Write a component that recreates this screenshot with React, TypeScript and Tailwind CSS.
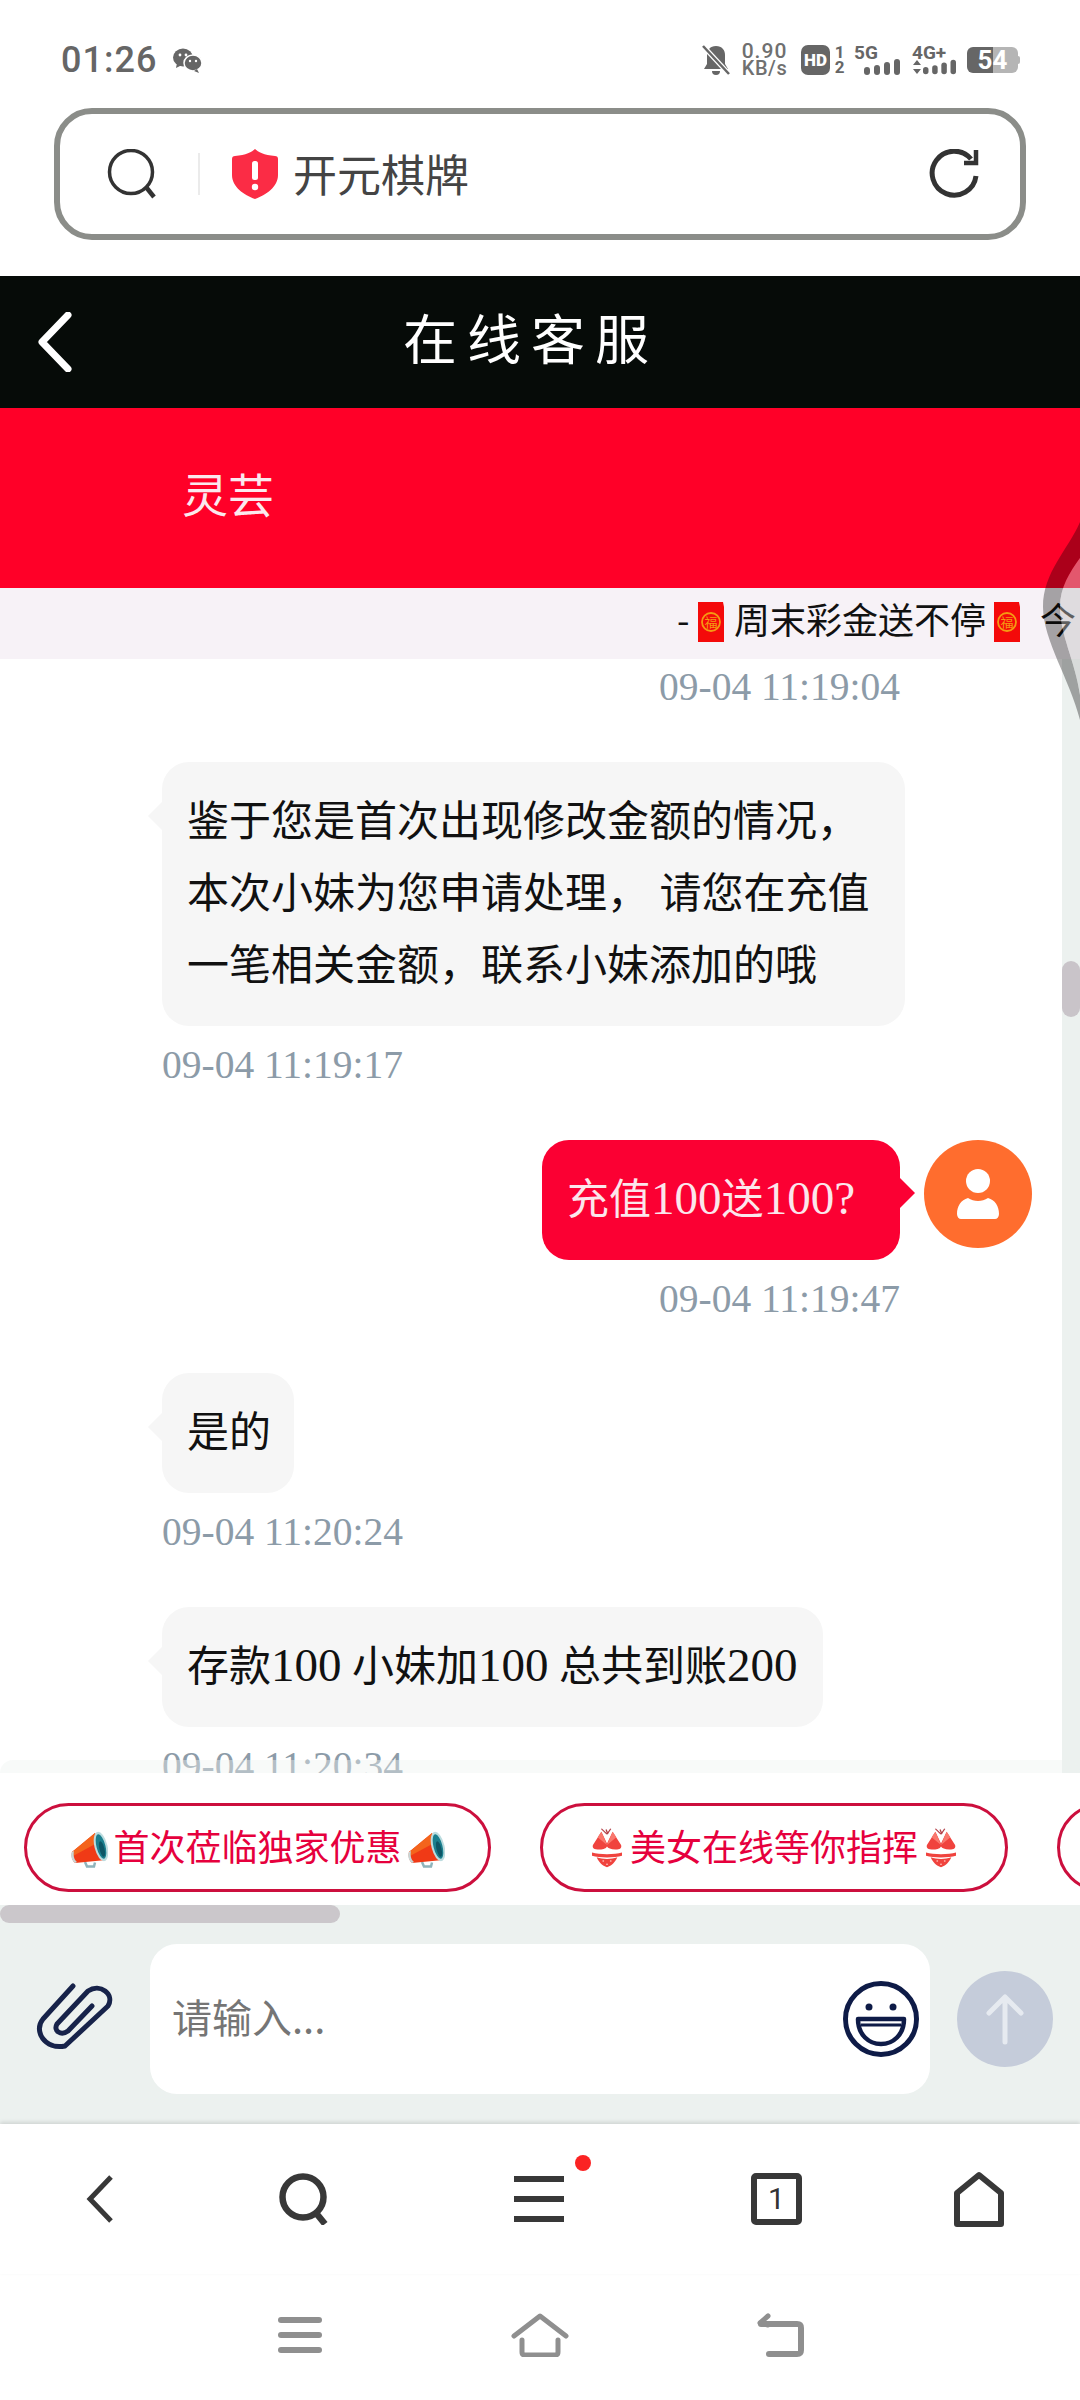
import React from "react";

const Ts = ({ t, right, first }: { t: string; right?: boolean; first?: boolean }) => (
  <div
    className={`h-[44px] text-[39.5px] leading-[44px] text-[#8c9ba8] font-['Liberation_Serif','Noto_Sans_CJK_SC',serif] whitespace-nowrap ${
      first ? "mt-0" : "mt-[17px]"
    } ${right ? "text-right pr-[162px]" : "pl-[162px]"}`}
  >
    {t}
  </div>
);

const Left = ({ children }: { children: React.ReactNode }) => (
  <div className="relative ml-[162px] w-fit rounded-[27px] bg-[#f6f6f6] px-[25px] py-[24px] font-['Liberation_Serif','Noto_Sans_CJK_SC',serif] text-[42px] leading-[72px] text-[#111] whitespace-nowrap">
    <div className="absolute left-[-14px] top-[40px] h-0 w-0 border-y-[14px] border-r-[14px] border-y-transparent border-r-[#f6f6f6]" />
    {children}
  </div>
);

const Num = ({ children }: { children: React.ReactNode }) => <span className="text-[47px] leading-none">{children}</span>;

const Bars = ({ w = 36 }: { w?: number }) => (
  <svg width={w} height="16" viewBox="0 0 36 16" fill="#666">
    <rect x="0" y="8" width="6" height="8" rx="3" />
    <rect x="10" y="6" width="6" height="10" rx="3" />
    <rect x="20" y="3" width="6" height="13" rx="3" />
    <rect x="30" y="0" width="6" height="16" rx="3" />
  </svg>
);

const Packet = () => (
  <svg width="26" height="40" viewBox="0 0 26 40" className="shrink-0">
    <path d="M0 0H25L26 5V40H0Z" fill="#f40a0a" />
    <circle cx="13" cy="20" r="9" fill="#f40a0a" stroke="#f59a12" strokeWidth="1.8" />
    <text x="13" y="25" textAnchor="middle" fontSize="13" fill="#f59a12" fontFamily="Noto Sans CJK SC">福</text>
  </svg>
);

const Megaphone = () => (
  <svg width="38" height="40" viewBox="0 0 38 40" className="shrink-0">
    <path d="M15 34l2 4.5h7l1-4" fill="none" stroke="#8fb4bb" strokeWidth="2.5" />
    <path d="M2 24L25 5L36 32L5 35C2 33 1 27 2 24Z" fill="#f03a16" />
    <path d="M2 24L25 5L29 14L3 28Z" fill="#f4641c" />
    <path d="M2 24C0 27 2 33 5 35L7 34C4 32 3 27 4 23Z" fill="#c9d6d6" />
    <ellipse cx="31" cy="18.5" rx="6.5" ry="15" transform="rotate(-14 31 18.5)" fill="#bcdcdf" />
    <ellipse cx="31" cy="18.5" rx="4.5" ry="12.5" transform="rotate(-14 31 18.5)" fill="#1b7f8e" />
    <ellipse cx="32" cy="21" rx="2.5" ry="8" transform="rotate(-14 32 21)" fill="#0e5666" />
  </svg>
);

const Bikini = () => (
  <svg width="30" height="40" viewBox="0 0 32 52" preserveAspectRatio="none" className="shrink-0">
    <path d="M15 2l2 6M20 1l-4 7M10 1l6 7" stroke="#b3424a" strokeWidth="1.4" fill="none" />
    <path d="M10 5L1 22C0 26 2 28 8 28C13 28 15 26 16 24C17 26 20 28 25 28C30 28 32 26 31 22L22 5L16 20Z" fill="#f0433e" />
    <path d="M16 22L6 12L10 5Z M16 22L26 12L22 5Z" fill="#f9786e" />
    <path d="M0 32C8 35 24 35 32 32V36C24 39 8 39 0 36Z" fill="#f0433e" />
    <path d="M5 38C12 41 20 41 27 38C25 44 21 49 16 51C11 49 7 44 5 38Z" fill="#f0433e" />
    <circle cx="12" cy="43" r="1" fill="#ffc9c2" /><circle cx="20" cy="43" r="1" fill="#ffc9c2" /><circle cx="16" cy="47" r="1" fill="#ffc9c2" />
  </svg>
);

export default function App() {
  return (
    <div className="relative flex h-[2400px] w-[1080px] flex-col overflow-hidden bg-white font-['Noto_Sans_CJK_SC','Liberation_Sans',sans-serif]">
      {/* status bar */}
      <div className="flex h-[108px] items-center pl-[61px] pr-[60px] pt-[12px] text-[#666]">
        <span className="font-['Roboto',sans-serif] text-[36px] font-medium leading-none tracking-[1px]">01:26</span>
        <svg width="29" height="25" viewBox="0 0 29 25" fill="#666" className="ml-[16px]">
          <ellipse cx="10" cy="9.5" rx="10" ry="9" />
          <path d="M4 15l-1 5 6-3z" />
          <ellipse cx="20" cy="15" rx="9" ry="8" stroke="#fff" strokeWidth="1.5" />
          <path d="M24 21l2 4-5-2z" />
          <circle cx="7" cy="7" r="1.4" fill="#fff" /><circle cx="13" cy="7" r="1.4" fill="#fff" />
          <circle cx="17" cy="13" r="1.2" fill="#fff" /><circle cx="23" cy="13" r="1.2" fill="#fff" />
        </svg>
        <div className="ml-auto flex items-center">
          <svg width="28" height="30" viewBox="0 0 28 30" fill="#666">
            <path d="M14 1c6 0 9 4 9 9v9l3 5H2l3-5v-9c0-5 3-9 9-9z" />
            <path d="M10 26h8a4 4 0 0 1-8 0z" />
            <path d="M1 1l26 28" stroke="#fff" strokeWidth="5" />
            <path d="M1 1l26 28" stroke="#666" strokeWidth="2.5" />
          </svg>
          <div className="ml-[11px] flex w-[47px] flex-col items-center font-['Roboto',sans-serif] font-medium leading-none text-[#707070]">
            <span className="text-[21px] tracking-[1px] leading-[16px]">0.90</span>
            <span className="text-[20px] tracking-[0.5px] leading-[19px]">KB/s</span>
          </div>
          <div className="ml-[13px] flex h-[30px] w-[29px] items-center justify-center rounded-[7px] bg-[#666] font-['Roboto',sans-serif] text-[17px] font-black leading-none text-white">HD</div>
          <div className="ml-[5px] flex w-[9px] flex-col items-center font-['Roboto',sans-serif] text-[17px] font-bold leading-[15px]">
            <span>1</span>
            <span>2</span>
          </div>
          <div className="ml-[10px] flex w-[46px] flex-col font-['Roboto',sans-serif] text-[19px] font-bold leading-[13px]">
            <span>5G</span>
            <div className="ml-[10px] flex">
              <Bars />
            </div>
          </div>
          <div className="ml-[12px] flex w-[44px] flex-col font-['Roboto',sans-serif] text-[19px] font-bold leading-[13px]">
            <span>4G+</span>
            <div className="flex items-center">
              <svg width="10" height="16" viewBox="0 0 10 16" fill="#666">
                <path d="M5 1l4 5H1zM5 15L1 10h8z" />
              </svg>
              <div className="ml-[1px] flex">
                <Bars w={33} />
              </div>
            </div>
          </div>
          <div className="ml-[11px] flex items-center">
            <div className="flex h-[26px] w-[51px] items-center justify-center rounded-[6px] bg-[linear-gradient(90deg,#666_51%,#b5b5b5_51%)] font-['Roboto',sans-serif] text-[26px] font-bold leading-none text-white">54</div>
            <div className="h-[8px] w-[2px] rounded-r-[2px] bg-[#b5b5b5]" />
          </div>
        </div>
      </div>

      {/* url bar */}
      <div className="ml-[54px] flex h-[132px] w-[972px] items-center rounded-[38px] border-[6px] border-[#8b8d89]">
        <svg width="50" height="50" viewBox="0 0 50 50" fill="none" stroke="#333" strokeWidth="3.5" className="ml-[47px]">
          <circle cx="24" cy="23" r="21.5" />
          <path d="M39 38l8 10" strokeWidth="4.5" />
        </svg>
        <div className="ml-[41px] h-[42px] w-[2px] bg-[#ebebeb]" />
        <svg width="46" height="50" viewBox="0 0 46 50" className="ml-[32px]">
          <path d="M23 0C26 3 32 6 43 7C45 7 46 8 46 10V26C46 38 34 46 23 50C12 46 0 38 0 26V10C0 8 1 7 3 7C14 6 20 3 23 0Z" fill="#fb2c45" />
          <rect x="20" y="12" width="6" height="19" rx="2.5" fill="#fff" />
          <circle cx="23" cy="38" r="3.2" fill="#fff" />
        </svg>
        <span className="ml-[15px] pb-[3px] text-[44px] leading-none text-[#444]">开元棋牌</span>
        <svg width="52" height="50" viewBox="0 0 52 50" fill="none" stroke="#333" strokeWidth="5" className="ml-auto mr-[39px]">
          <path d="M47 27A22 22 0 1 1 42 10" />
          <path d="M47 1V14H35" strokeWidth="4.5" />
        </svg>
      </div>

      {/* header */}
      <div className="relative mt-[36px] flex h-[132px] items-center bg-[#060b08]">
        <svg width="40" height="60" viewBox="0 0 40 60" fill="none" stroke="#fff" strokeWidth="7" strokeLinecap="round" strokeLinejoin="round" className="ml-[34px]">
          <path d="M34 3L8 30L34 57" />
        </svg>
        <span className="ml-[329px] pb-[10px] text-[54px] leading-none tracking-[10px] text-white">在线客服</span>
      </div>

      {/* agent name */}
      <div className="flex h-[180px] items-center bg-[#ff0028] pb-[12px] pl-[182px] text-[46px] leading-none text-[#fbe9ee]">灵芸</div>

      {/* marquee */}
      <div className="flex h-[71px] items-center overflow-hidden whitespace-nowrap bg-[#f7f2f7] pb-[4px] pl-[677px] text-[36px] leading-none text-[#111]">
        <span className="w-[21px] shrink-0 pb-[8px]">-</span>
        <Packet />
        <span className="ml-[10px] shrink-0 pb-[8px]">周末彩金送不停</span>
        <span className="ml-[8px] flex shrink-0"><Packet /></span>
        <span className="ml-[20px] shrink-0 pb-[8px]">今</span>
      </div>

      {/* chat */}
      <div className="relative flex h-[1114px] overflow-hidden">
        <div className="flex-1 pt-[6px]">
          <Ts t="09-04 11:19:04" right first />
          <div className="mt-[53px]">
            <Left>
              <div className="w-[693px]">
                鉴于您是首次出现修改金额的情况，
                <br />
                本次小妹为您申请处理， 请您在充值
                <br />
                一笔相关金额，联系小妹添加的哦
              </div>
            </Left>
            <Ts t="09-04 11:19:17" />
          </div>

          <div className="mt-[53px]">
            <div className="ml-auto mr-[30px] flex w-fit items-start">
              <div className="relative rounded-[27px] bg-[#fb0033] py-[24px] pl-[25px] pr-[45px] font-['Liberation_Serif','Noto_Sans_CJK_SC',serif] text-[42px] leading-[72px] text-[#fbe6ec] whitespace-nowrap">
                <div className="absolute right-[-15px] top-[38px] h-0 w-0 border-y-[15px] border-l-[15px] border-y-transparent border-l-[#fb0033]" />
                充值<Num>100</Num>送<Num>100?</Num>
              </div>
              <div className="ml-[24px] flex h-[108px] w-[108px] items-center justify-center rounded-full bg-[#ff6d2e]">
                <svg width="108" height="108" viewBox="0 0 108 108" fill="#fff">
                  <circle cx="54" cy="41" r="12" />
                  <path d="M33 74C33 66 37 60 44 58C50 62 58 62 64 58C71 60 75 66 75 74C75 77 73 79 71 79H37C35 79 33 77 33 74Z" />
                </svg>
              </div>
            </div>
            <Ts t="09-04 11:19:47" right />
          </div>

          <div className="mt-[52px]">
            <Left>
              <span className="-mr-[2px] block">是的</span>
            </Left>
            <Ts t="09-04 11:20:24" />
          </div>

          <div className="mt-[53px]">
            <Left>
              存款<Num>100</Num> 小妹加<Num>100</Num> 总共到账<Num>200</Num>
            </Left>
            <Ts t="09-04 11:20:34" />
          </div>
        </div>

        {/* scrollbar */}
        <div className="w-[18px] shrink-0 bg-[#ecf1ef] pt-[302px]">
          <div className="h-[56px] w-[18px] rounded-[9px] bg-[#c9c4c9]" />
        </div>
        <div className="absolute inset-x-0 bottom-0 h-[13px] rounded-t-[14px] bg-[#edf2f0]/40" />
      </div>

      {/* quick chips */}
      <div className="flex h-[132px] gap-[49px] overflow-hidden bg-white pl-[24px] pt-[30px]">
        <div className="flex h-[89px] w-[467px] shrink-0 items-center justify-center gap-[5px] rounded-full border-[3px] border-[#cc0f3d] text-[36px] leading-none text-[#e6003d]">
          <Megaphone />
          <span className="pb-[5px]">首次莅临独家优惠</span>
          <Megaphone />
        </div>
        <div className="flex h-[89px] w-[468px] shrink-0 items-center justify-center gap-[8px] rounded-full border-[3px] border-[#cc0f3d] text-[36px] leading-none text-[#e6003d]">
          <Bikini />
          <span className="pb-[5px]">美女在线等你指挥</span>
          <Bikini />
        </div>
        <div className="h-[89px] w-[465px] shrink-0 rounded-full border-[3px] border-[#cc0f3d]" />
      </div>

      {/* input */}
      <div className="h-[219px] bg-[#ecf1ef]">
        <div className="h-[18px] w-[340px] rounded-[9px] bg-[#cbc7cb]" />
        <div className="mt-[21px] flex h-[150px] items-center">
          <svg width="110" height="100" viewBox="0 0 110 100" fill="none" stroke="#17234a" strokeWidth="5" strokeLinecap="round" strokeLinejoin="round" className="ml-[20px]">
            <path d="M53 17L23 50C13 62 25 81 45 77L88 37C95 25 80 14 68 22L37 55C33 62 41 67 48 62L72 37" />
          </svg>
          <div className="ml-[20px] flex h-[150px] w-[780px] items-center justify-between rounded-[27px] bg-white pl-[22px] pr-[11px]">
            <span className="pb-[6px] text-[40px] leading-none text-[#757575]">请输入...</span>
            <svg width="76" height="76" viewBox="0 0 76 76" fill="none">
              <circle cx="38" cy="38" r="35.5" stroke="#0e1b47" strokeWidth="5" />
              <circle cx="26" cy="26" r="3.5" fill="#0e1b47" />
              <circle cx="50" cy="26" r="3.5" fill="#0e1b47" />
              <path d="M15 38H61C61 54 50 63 38 63C26 63 15 54 15 38Z" stroke="#0e1b47" strokeWidth="4.5" strokeLinejoin="round" />
              <path d="M18 44H58" stroke="#0e1b47" strokeWidth="3" />
            </svg>
          </div>
          <div className="ml-[27px] flex h-[96px] w-[96px] items-center justify-center rounded-full bg-[#c5ccda]">
            <svg width="40" height="52" viewBox="0 0 40 52" fill="none" stroke="#e6eaf0" strokeWidth="5" strokeLinecap="round" strokeLinejoin="round">
              <path d="M20 49V4M4 20L20 4L36 20" />
            </svg>
          </div>
        </div>
      </div>

      {/* browser nav */}
      <div className="relative flex h-[150px] items-center bg-white shadow-[0_-2px_4px_rgba(0,0,0,0.12)]">
        <svg width="28" height="48" viewBox="0 0 28 48" fill="none" stroke="#383838" strokeWidth="5" className="ml-[86px]">
          <path d="M25 2L4 24L25 46" />
        </svg>
        <svg width="50" height="52" viewBox="0 0 50 52" fill="none" stroke="#383838" strokeWidth="6.5" className="ml-[165px]">
          <circle cx="24" cy="24" r="20.5" />
          <path d="M37 40l9 11" />
        </svg>
        <div className="relative ml-[185px] flex h-[46px] w-[50px] flex-col justify-between">
          <div className="h-[6px] bg-[#383838]" />
          <div className="h-[6px] bg-[#383838]" />
          <div className="h-[6px] bg-[#383838]" />
          <div className="absolute right-[-27px] top-[-21px] h-[16px] w-[16px] rounded-full bg-[#fb2323]" />
        </div>
        <div className="ml-[187px] flex h-[52px] w-[51px] items-center justify-center rounded-[5px] border-[6px] border-[#383838] font-['Roboto',sans-serif] text-[30px] font-normal leading-none text-[#333]">1</div>
        <svg width="50" height="56" viewBox="0 0 50 56" fill="none" stroke="#383838" strokeWidth="6" strokeLinejoin="round" className="ml-[152px]">
          <path d="M25 4L47 22V53H3V22Z" />
        </svg>
      </div>

      {/* system nav */}
      <div className="flex h-[120px] justify-center bg-white pt-[2px]">
        <div className="flex w-[240px] items-center justify-center">
          <div className="flex h-[36px] w-[44px] flex-col justify-between">
            <div className="h-[6px] rounded-[3px] bg-[#8f8f8f]" />
            <div className="h-[6px] rounded-[3px] bg-[#8f8f8f]" />
            <div className="h-[6px] rounded-[3px] bg-[#8f8f8f]" />
          </div>
        </div>
        <div className="flex w-[240px] items-center justify-center">
          <svg width="58" height="44" viewBox="0 0 58 44" fill="none" stroke="#8f8f8f" strokeWidth="5" strokeLinecap="round" strokeLinejoin="round">
            <path d="M3 23L29 3L55 23" />
            <path d="M11 27V39C11 41 12 42 14 42H44C46 42 47 41 47 39V27" />
          </svg>
        </div>
        <div className="flex w-[240px] items-center justify-center">
          <svg width="48" height="44" viewBox="0 0 48 44" fill="none" stroke="#8f8f8f" strokeWidth="6" strokeLinecap="round" strokeLinejoin="round">
            <path d="M12 3L4 10L12 12" strokeWidth="5" />
            <path d="M5 11H41C44 11 45 12 45 15V37C45 40 44 41 41 41H13" />
          </svg>
        </div>
      </div>

      {/* edge gesture */}
      <svg width="40" height="240" viewBox="1040 500 40 240" className="absolute left-[1040px] top-[500px]">
        <path fillRule="evenodd" d="M1080 522C1068 550 1043 572 1043 607C1043 640 1070 680 1080 720ZM1080 558C1070 572 1060 587 1060 607C1060 635 1075 660 1080 695Z" fill="#000" fillOpacity="0.33" />
        <path d="M1080 558C1070 572 1060 587 1060 607C1060 635 1075 660 1080 695Z" fill="#c1c1c1" fillOpacity="0.45" />
      </svg>
    </div>
  );
}
